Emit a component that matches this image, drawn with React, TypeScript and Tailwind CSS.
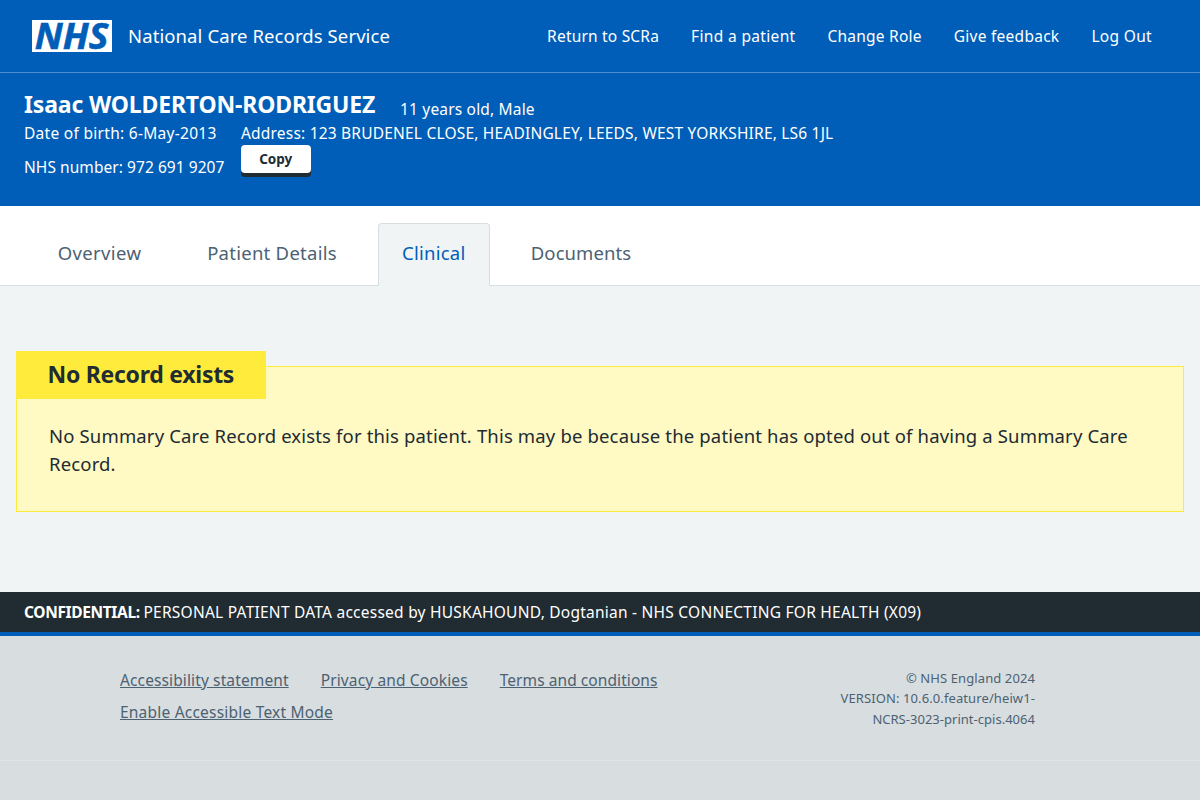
import type { ReactNode } from 'react';

const navLinks = [
  { label: 'Return to SCRa', tracking: 'tracking-[0.2px]' },
  { label: 'Find a patient', tracking: 'tracking-[0.34px]' },
  { label: 'Change Role', tracking: 'tracking-[0.22px]' },
  { label: 'Give feedback', tracking: 'tracking-[0.27px]' },
  { label: 'Log Out', tracking: 'tracking-[0.32px]' },
];

function NhsLogo() {
  return (
    <svg className="block h-8 w-20 shrink-0 overflow-visible" viewBox="0 0 80 32" role="img" aria-label="NHS">
      <rect width="80" height="32" fill="#fff" />
      <text
        x="2.8"
        y="29"
        textLength="73.5"
        lengthAdjust="spacingAndGlyphs"
        fontFamily="'Open Sans', 'Noto Sans', sans-serif"
        fontWeight="700"
        fontStyle="italic"
        fontSize="36"
        fill="#005eb8"
        stroke="#005eb8"
        strokeWidth="0.6"
      >
        NHS
      </text>
    </svg>
  );
}

function Header() {
  return (
    <header className="flex h-[73px] items-center border-b border-[#4d8eca] pr-12 pl-8 text-white">
      <NhsLogo />
      <span className="pl-4 text-[18.5px] tracking-[0.1px]">National Care Records Service</span>
      <nav className="ml-auto flex gap-8 pt-0.5 text-[15.5px]">
        {navLinks.map((link) => (
          <a key={link.label} href="#" className={link.tracking}>
            {link.label}
          </a>
        ))}
      </nav>
    </header>
  );
}

function PatientBanner() {
  return (
    <section className="h-[133px] px-6 pt-[19px] text-[15.5px] text-white">
      <div className="flex h-7 items-start">
        <h1 className="w-[376px] text-[23px] leading-6 font-bold tracking-[-0.16px]">
          Isaac WOLDERTON-RODRIGUEZ
        </h1>
        <span className="pt-[5px] leading-6 tracking-[0.18px]">11 years old, Male</span>
      </div>
      <div className="flex h-[25px] pt-px leading-6">
        <span className="w-[217px] tracking-[0.29px]">Date of birth: 6-May-2013</span>
        <span className="tracking-[0.2px]">
          Address: 123 BRUDENEL CLOSE, HEADINGLEY, LEEDS, WEST YORKSHIRE, LS6 1JL
        </span>
      </div>
      <div className="flex items-start">
        <span className="w-[217px] pt-[10px] leading-6 tracking-[0.06px]">NHS number: 972 691 9207</span>
        <button className="h-7 w-[69.5px] rounded bg-white text-[13.5px] leading-7 font-bold text-[#212b32] shadow-[0_4px_0_#212b32]">
          Copy
        </button>
      </div>
    </section>
  );
}

function Tab({ active = false, className, children }: { active?: boolean; className: string; children: ReactNode }) {
  return (
    <a
      href="#"
      className={`flex h-[63px] items-start justify-center rounded-t border border-b-0 pt-4 text-[18.5px] leading-[26px] ${
        active ? 'border-[#d8dde0] bg-[#f0f4f5] text-[#005eb8]' : 'border-transparent text-[#4c6272]'
      } ${className}`}
    >
      {children}
    </a>
  );
}

function Tabs() {
  return (
    <nav className="h-20 bg-white pt-[17px] pl-[33px] shadow-[inset_0_-1px_0_#d8dde0]">
      <div className="flex">
        <Tab className="w-[133px] tracking-[0.38px]">Overview</Tab>
        <Tab className="ml-[17px] w-[178px] tracking-[0.26px]">Patient Details</Tab>
        <Tab active className="ml-[16.5px] w-[112.5px] tracking-[0.25px]">
          Clinical
        </Tab>
        <Tab className="ml-[16.5px] w-[149px] tracking-[0.08px]">Documents</Tab>
      </div>
    </nav>
  );
}

function WarningCallout() {
  return (
    <div className="mx-4 mt-20 h-[146px] border border-[#ffeb3b] bg-[#fff9c4] px-8">
      <h2 className="-mt-4 -ml-[33px] h-12 w-[250px] bg-[#ffeb3b] pl-[31.5px] text-[23px] leading-[47px] font-bold tracking-[-0.27px] whitespace-nowrap">
        No Record exists
      </h2>
      <p className="mt-[23px] text-[18.5px] leading-7 tracking-[0.155px]">
        No Summary Care Record exists for this patient. This may be because the patient has opted out of having a
        Summary Care Record.
      </p>
    </div>
  );
}

function Footer() {
  return (
    <footer className="h-[168px] border-t-4 border-[#005eb8] bg-[#d8dde0] text-[#4c6272]">
      <div className="flex h-[125px] justify-between border-b border-[#dfe4e6] pt-7 pr-[165px] pl-[120px]">
        <ul className="flex w-[620px] flex-wrap content-start gap-x-8 text-[15.5px] leading-8 underline underline-offset-1">
          <li><a href="#" className="tracking-[0.12px]">Accessibility statement</a></li>
          <li><a href="#" className="tracking-[0.13px]">Privacy and Cookies</a></li>
          <li><a href="#" className="tracking-[0.07px]">Terms and conditions</a></li>
          <li><a href="#" className="tracking-[0.21px]">Enable Accessible Text Mode</a></li>
        </ul>
        <p className="pt-1 text-right text-[13px] leading-[20.4px] tracking-[0.1px]">
          © NHS England 2024
          <br />
          VERSION: 10.6.0.feature/heiw1-
          <br />
          <span className="tracking-[0.02px]">NCRS-3023-print-cpis.4064</span>
        </p>
      </div>
    </footer>
  );
}

export default function App() {
  return (
    <div className="flex h-[800px] w-[1200px] flex-col overflow-hidden bg-[#f0f4f5] font-['Noto_Sans',sans-serif] font-[450] text-[#212b32]">
      <div className="bg-[#005eb8]">
        <Header />
        <PatientBanner />
      </div>
      <Tabs />
      <main className="h-[306px]">
        <WarningCallout />
      </main>
      <div className="h-10 bg-[#212b32] pl-6 text-[15.5px] leading-[41px] whitespace-nowrap text-white">
        <strong className="inline-block w-[119.5px] text-[15.5px] font-bold tracking-[-0.36px]">CONFIDENTIAL:</strong>
        <span className="tracking-[0.24px]">
          PERSONAL PATIENT DATA accessed by HUSKAHOUND, Dogtanian - NHS CONNECTING FOR HEALTH (X09)
        </span>
      </div>
      <Footer />
    </div>
  );
}
